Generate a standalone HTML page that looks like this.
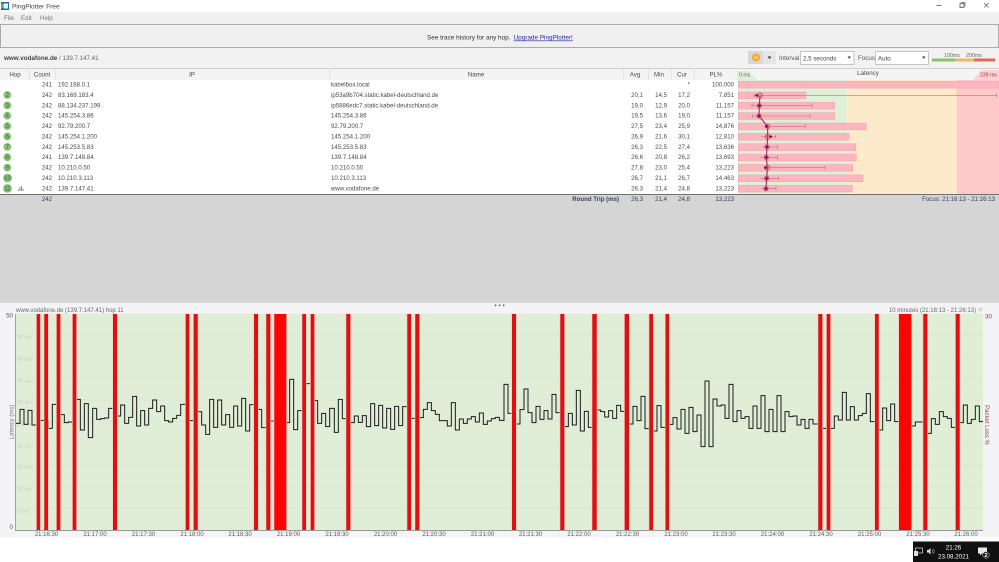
<!DOCTYPE html>
<html><head><meta charset="utf-8"><title>PingPlotter Free</title>
<style>
html,body{margin:0;padding:0;background:#fff;width:999px;height:562px;overflow:hidden}
svg{display:block;position:absolute;left:0;top:0;filter:blur(.25px)}
text{font-family:"Liberation Sans",sans-serif;font-size:6.1px;fill:#4a4a4a}
.e{text-anchor:end}.m{text-anchor:middle}
.h{fill:#4a4a4a;font-size:6.2px}
.n{fill:#34415e}
.t text{fill:#5c5c5c;font-size:6px;text-anchor:middle}
.f text{fill:#c5d4bd;font-size:5.5px}
.b{fill:#3a6435;font-size:6px;text-anchor:middle}
.c{fill:#86c278}
.v path{vector-effect:non-scaling-stroke}
</style></head><body>
<svg width="999" height="562" viewBox="0 0 999 562" xmlns="http://www.w3.org/2000/svg">
<rect width="999" height="562" fill="#fff"/>
<!-- title bar -->
<rect x="1" y="2" width="8" height="8" fill="#1d6fa5"/><rect x="3.5" y="3.5" width="4.5" height="5" fill="#e8f4f8"/><rect x="1" y="4" width="2" height="4" fill="#6fb04f"/>
<text x="12" y="8.5" style="font-size:6.6px;fill:#444">PingPlotter Free</text>
<path d="M936.5 5.5H941.5" stroke="#555" stroke-width=".8"/>
<rect x="960" y="3.5" width="4" height="4" fill="none" stroke="#555" stroke-width=".8"/><path d="M961.5 3V2.4H965V6H964.4" fill="none" stroke="#555" stroke-width=".6"/>
<path d="M984 3L988.5 7.5M988.5 3L984 7.5" stroke="#555" stroke-width=".7"/>
<!-- menu -->
<rect y="12" width="999" height="12" fill="#f0f0f0"/>
<text x="4" y="20" style="font-size:6.2px;fill:#777">File</text><text x="21" y="20" style="font-size:6.2px;fill:#777">Edit</text><text x="40" y="20" style="font-size:6.2px;fill:#777">Help</text>
<!-- banner -->
<rect x=".5" y="24.5" width="998" height="23" fill="#f0f0f0" stroke="#ababab"/>
<text x="427" y="39.5" style="font-size:6.4px;fill:#333">See trace history for any hop.</text>
<text x="513.5" y="39.5" style="font-size:6.4px;fill:#2a2a9a;text-decoration:underline">Upgrade PingPlotter!</text>
<!-- toolbar -->
<rect y="48" width="999" height="20.5" fill="#f2f2f2"/>
<text x="4" y="60" style="font-size:6.3px;font-weight:bold;fill:#444">www.vodafone.de</text>
<text x="59" y="60" style="font-size:6.2px;fill:#666">/ 139.7.147.41</text>
<rect x="748" y="51" width="15.5" height="13" fill="#d8d8d8"/><circle cx="756" cy="57.5" r="4" fill="#f0a92e"/><path d="M755 55.7V59.3M757 55.7V59.3" stroke="#fff3d8" stroke-width=".8"/>
<rect x="764" y="51" width="12" height="13" fill="#e6e6e6"/><path d="M767.5 56.5H771.5L769.5 59Z" fill="#333"/>
<text x="779" y="60" style="font-size:6.2px;fill:#555">Interval</text>
<rect x="800.5" y="51.5" width="53.5" height="13" fill="#fff" stroke="#c4c4c4"/><text x="803" y="60.5" style="font-size:6.2px;fill:#444">2,5 seconds</text><path d="M847.5 56.5H851L849.2 58.8Z" fill="#333"/>
<text x="858" y="60" style="font-size:6.2px;fill:#555">Focus</text>
<rect x="875.5" y="51.5" width="53" height="13" fill="#fff" stroke="#c4c4c4"/><text x="878" y="60.5" style="font-size:6.2px;fill:#444">Auto</text><path d="M922 56.5H925.5L923.7 58.8Z" fill="#333"/>
<rect x="932" y="58.5" width="23" height="3" fill="#8cc070"/><rect x="955" y="58.5" width="19" height="3" fill="#f0b860"/><rect x="974" y="58.5" width="21" height="3" fill="#e2685c"/>
<text x="952" y="57" class="m" style="font-size:5.3px;fill:#666">100ms</text><text x="974" y="57" class="m" style="font-size:5.3px;fill:#666">200ms</text>
<!-- header -->
<rect y="68.5" width="999" height="11.5" fill="#f4f4f4"/><path d="M0 68.5H999" stroke="#c4c4c4" stroke-width=".8"/>
<path d="M29.5 69V80M55.5 69V80M329.5 69V80M623.5 69V80M648.5 69V80M671.5 69V80M694.5 69V80M737.5 69V80" stroke="#e4e4e4"/>
<polygon points="738,71 748,71 758,80 738,80" fill="#dcefd4"/>
<polygon points="981,70 999,70 999,80 973,80" fill="#ffd3d3"/>
<text x="15" y="76.5" class="h m">Hop</text><text x="42" y="76.5" class="h m">Count</text><text x="192" y="76.5" class="h m">IP</text><text x="476" y="76.5" class="h m">Name</text>
<text x="635" y="76.5" class="h m">Avg</text><text x="659" y="76.5" class="h m">Min</text><text x="682" y="76.5" class="h m">Cur</text><text x="716" y="76.5" class="h m">PL%</text>
<text x="868" y="75" class="h m">Latency</text>
<text x="739" y="76.5" style="font-size:5.2px;fill:#667">0 ms</text><text x="997" y="76.5" class="e" style="font-size:5.2px;fill:#8a3a3a">239 ms</text>
<!-- latency background -->
<rect x="738" y="80" width="108.7" height="114" fill="#dff0d8"/><rect x="846.7" y="80" width="110" height="114" fill="#fdeacb"/><rect x="956.7" y="80" width="42.3" height="114" fill="#ffc9c9"/>
<!-- latency bars -->
<g fill="#fdb6c0" stroke="#efa0ac" stroke-width=".5">
<rect x="738.3" y="81.3" width="260.7" height="6.8"/><rect x="738.3" y="92" width="67.7" height="6.8"/><rect x="738.3" y="102.3" width="96.4" height="6.8"/><rect x="738.3" y="112.7" width="96.4" height="6.8"/><rect x="738.3" y="123" width="128" height="6.8"/><rect x="738.3" y="133.4" width="110.7" height="6.8"/><rect x="738.3" y="143.8" width="117.4" height="6.8"/><rect x="738.3" y="154.1" width="118" height="6.8"/><rect x="738.3" y="164.5" width="114.4" height="6.8"/><rect x="738.3" y="174.9" width="124.7" height="6.8"/><rect x="738.3" y="185.2" width="114" height="6.8"/>
</g>
<g transform="translate(700 70) scale(.33333)" class="v">
<path d="M162 76H890M156 107H336M158 138H330M192 169H316M184 200H226M187 231H232M181 262H233M191 293H375M182 325H236M184 356H228" stroke="#b87088" stroke-width=".6" fill="none"/>
<path d="M162 70V82M890 70V82M156 101V113M336 101V113M158 132V144M330 132V144M316 163V175M226 194V206M232 225V237M233 256V268M375 287V299M236 319V331M228 350V362" stroke="#b87088" stroke-width=".6" fill="none"/>
<path d="M180 76L178 107L177 138L203 169L203 200L201 231L199 262L202 293L200 325L198 356" stroke="#a42848" stroke-width="1.1" fill="none"/>
<g fill="none" stroke="#d0405c" stroke-width="3"><circle cx="180" cy="76" r="7"/><circle cx="178" cy="107" r="6"/><circle cx="177" cy="138" r="6"/><circle cx="203" cy="169" r="6"/><circle cx="203" cy="200" r="7"/><circle cx="201" cy="231" r="6"/><circle cx="199" cy="262" r="6"/><circle cx="202" cy="293" r="7"/><circle cx="200" cy="325" r="6"/><circle cx="198" cy="356" r="6"/></g>
<g fill="#5a1a7a"><circle cx="170" cy="76" r="4"/><circle cx="178" cy="107" r="4"/><circle cx="177" cy="138" r="4"/><circle cx="199" cy="169" r="4"/><circle cx="212" cy="200" r="4"/><circle cx="201" cy="231" r="4"/><circle cx="199" cy="262" r="4"/><circle cx="196" cy="293" r="4"/><circle cx="200" cy="325" r="4"/><circle cx="198" cy="356" r="4"/></g>
</g>
<!-- rows -->
<g>
<text x="52" y="86.7" class="e">241</text><text x="58" y="86.7">192.168.0.1</text><text x="331" y="86.7">kabelbox.local</text><text x="690" y="86.7" class="e">*</text><text x="734" y="86.7" class="e">100,000</text>
<circle class="c" cx="7.3" cy="95" r="3.9"/><text class="b" x="7.3" y="97">2</text><text x="52" y="97" class="e">242</text><text x="58" y="97">83.169.183.4</text><text x="331" y="97">ip53a9b704.static.kabel-deutschland.de</text><text x="643" y="97" class="e">20,1</text><text x="667" y="97" class="e">14,5</text><text x="690" y="97" class="e">17,2</text><text x="734" y="97" class="e">7,851</text>
<circle class="c" cx="7.3" cy="105.4" r="3.9"/><text class="b" x="7.3" y="107.4">3</text><text x="52" y="107.4" class="e">242</text><text x="58" y="107.4">88.134.237.199</text><text x="331" y="107.4">ip5886edc7.static.kabel-deutschland.de</text><text x="643" y="107.4" class="e">19,0</text><text x="667" y="107.4" class="e">12,9</text><text x="690" y="107.4" class="e">20,0</text><text x="734" y="107.4" class="e">11,157</text>
<circle class="c" cx="7.3" cy="115.7" r="3.9"/><text class="b" x="7.3" y="117.7">4</text><text x="52" y="117.7" class="e">242</text><text x="58" y="117.7">145.254.3.86</text><text x="331" y="117.7">145.254.3.86</text><text x="643" y="117.7" class="e">19,5</text><text x="667" y="117.7" class="e">13,6</text><text x="690" y="117.7" class="e">19,0</text><text x="734" y="117.7" class="e">11,157</text>
<circle class="c" cx="7.3" cy="126.1" r="3.9"/><text class="b" x="7.3" y="128.1">5</text><text x="52" y="128.1" class="e">242</text><text x="58" y="128.1">92.79.200.7</text><text x="331" y="128.1">92.79.200.7</text><text x="643" y="128.1" class="e">27,5</text><text x="667" y="128.1" class="e">23,4</text><text x="690" y="128.1" class="e">25,9</text><text x="734" y="128.1" class="e">14,876</text>
<circle class="c" cx="7.3" cy="136.5" r="3.9"/><text class="b" x="7.3" y="138.5">6</text><text x="52" y="138.5" class="e">242</text><text x="58" y="138.5">145.254.1.200</text><text x="331" y="138.5">145.254.1.200</text><text x="643" y="138.5" class="e">26,9</text><text x="667" y="138.5" class="e">21,6</text><text x="690" y="138.5" class="e">30,1</text><text x="734" y="138.5" class="e">12,810</text>
<circle class="c" cx="7.3" cy="146.9" r="3.9"/><text class="b" x="7.3" y="148.9">7</text><text x="52" y="148.9" class="e">242</text><text x="58" y="148.9">145.253.5.83</text><text x="331" y="148.9">145.253.5.83</text><text x="643" y="148.9" class="e">26,3</text><text x="667" y="148.9" class="e">22,5</text><text x="690" y="148.9" class="e">27,4</text><text x="734" y="148.9" class="e">13,636</text>
<circle class="c" cx="7.3" cy="157.2" r="3.9"/><text class="b" x="7.3" y="159.2">8</text><text x="52" y="159.2" class="e">241</text><text x="58" y="159.2">139.7.148.84</text><text x="331" y="159.2">139.7.148.84</text><text x="643" y="159.2" class="e">26,6</text><text x="667" y="159.2" class="e">20,8</text><text x="690" y="159.2" class="e">26,2</text><text x="734" y="159.2" class="e">13,693</text>
<circle class="c" cx="7.3" cy="167.6" r="3.9"/><text class="b" x="7.3" y="169.6">9</text><text x="52" y="169.6" class="e">242</text><text x="58" y="169.6">10.210.0.50</text><text x="331" y="169.6">10.210.0.50</text><text x="643" y="169.6" class="e">27,8</text><text x="667" y="169.6" class="e">23,0</text><text x="690" y="169.6" class="e">25,4</text><text x="734" y="169.6" class="e">13,223</text>
<circle class="c" cx="7.5" cy="178" r="4.4"/><text class="b" x="7.5" y="180">10</text><text x="52" y="180" class="e">242</text><text x="58" y="180">10.210.3.113</text><text x="331" y="180">10.210.3.113</text><text x="643" y="180" class="e">26,7</text><text x="667" y="180" class="e">21,1</text><text x="690" y="180" class="e">26,7</text><text x="734" y="180" class="e">14,463</text>
<circle class="c" cx="7.5" cy="188.4" r="4.4"/><text class="b" x="7.5" y="190.4">11</text><path d="M18.5 191V189M20 191V187M21.5 191V186M23 191V188.5" stroke="#666" stroke-width=".7"/><text x="52" y="190.7" class="e">242</text><text x="58" y="190.7">139.7.147.41</text><text x="331" y="190.7">www.vodafone.de</text><text x="643" y="190.7" class="e">26,3</text><text x="667" y="190.7" class="e">21,4</text><text x="690" y="190.7" class="e">24,8</text><text x="734" y="190.7" class="e">13,223</text>
</g>
<!-- summary -->
<rect y="194" width="999" height="109" fill="#d5d5d5"/><path d="M0 194.5H999" stroke="#707070"/>
<text x="52" y="201" class="e n">242</text>
<text x="619" y="201" class="e n" style="font-weight:bold">Round Trip (ms)</text>
<text x="643" y="201" class="e n">26,3</text><text x="667" y="201" class="e n">21,4</text><text x="690" y="201" class="e n">24,8</text><text x="734" y="201" class="e n">13,223</text>
<text x="995" y="201" class="e n">Focus: 21:16:13 - 21:26:13</text>
<!-- chart frame -->
<rect y="303" width="999" height="234.5" fill="#f4f4f6"/>
<circle cx="495.5" cy="305.3" r=".9" fill="#666"/><circle cx="499.6" cy="305.3" r=".9" fill="#666"/><circle cx="503.7" cy="305.3" r=".9" fill="#666"/>
<text x="16" y="312" style="font-size:6px;fill:#666">www.vodafone.de (139.7.147.41) hop 11</text>
<text x="976" y="312" class="e" style="font-size:6px;fill:#666">10 minutes (21:16:13 - 21:26:13)</text>
<circle cx="980.5" cy="309.5" r="2" fill="#d8d8d8"/>
<rect x="16" y="313.5" width="967" height="216.5" fill="#e0eed8"/>
<path d="M16 335H983M16 357H983M16 378H983M16 400H983M16 421H983M16 443H983M16 465H983M16 486H983M16 508H983" stroke="#d6e5ce" stroke-width=".8"/>
<g class="f"><text x="17" y="339">45 ms</text><text x="17" y="361">40 ms</text><text x="17" y="383">35 ms</text><text x="17" y="404">30 ms</text><text x="17" y="426">25 ms</text><text x="17" y="448">20 ms</text><text x="17" y="469">15 ms</text><text x="17" y="491">10 ms</text><text x="17" y="513">5 ms</text></g>
<path d="M15.5 314V530.5H983" fill="none" stroke="#999" stroke-width=".9"/>
<text x="13" y="317.5" class="e" style="font-size:6.2px;fill:#555">50</text><text x="13" y="529" class="e" style="font-size:6.2px;fill:#555">0</text>
<text transform="translate(13.5 422) rotate(-90)" class="m" style="font-size:6px;fill:#777">Latency (ms)</text>
<text x="985" y="318.5" style="font-size:6.2px;fill:#8a4040">30</text>
<text transform="translate(985 425) rotate(90)" class="m" style="font-size:6px;fill:#8a4040">Packet Loss %</text>
<!-- latency line -->
<g fill="none" stroke="#1a1a1a" stroke-width="1">
<path vector-effect="non-scaling-stroke" transform="translate(0 370) scale(.33333)" d="M48 160H60V118H72V163H84V121H96V165H120V151H145V175H157V103H181V134H193V158H205V156H229V88H241V180H253V101H265V203H278V115H290V148H302V146H314V144H326V115H350V138H362V105H374V160H386V142H398V79H410V168H422V122H434V165H446V115H458V90H470V125H482V108H494V152H506V156H518V145H530V136H542V103H566V152H593V125H605V165H617V193H629V88H641V172H653V90H665V165H677V134H689V172H701V108H713V168H725V85H737V183H749V104H773V118H785V173H809V153H857V158H869V28H881V179H893V122H917V41H941V92H953V160H965V130H977V170H989V115H999"/>
<path vector-effect="non-scaling-stroke" transform="translate(333 370) scale(.33333)" d="M0 115H4V187H16V88H28V146H52V158H64V138H76V157H88V137H100V170H113V101H125V167H137V106H149V174H161V115H173V178H185V109H197V167H209V110H234V145H259V143H271V118H283V98H295V122H307V133H319V152H343V168H355V98H367V180H379V147H391V160H403V147H415V140H427V156H439V129H451V163H463V153H475V146H487V142H499V151H513V43H525V130H549V162H561V119H573V57H585V128H597V158H609V109H621V148H633V122H645V147H657V73H669V128H694V170H706V130H718V165H730V61H742V183H754V124H766V172H791V120H803V125H815V141H827V122H839V145H851V106H863V124H888V162H900V109H912V152H924V79H936V176H960V183H972V107H984V172H999"/>
<path vector-effect="non-scaling-stroke" transform="translate(666 300) scale(.33333)" d="M0 382H9V373H21V353H33V387H45V328H57V400H69V322H81V395H93V345H105V440H117V243H129V440H141V297H153V318H165V315H177V355H189V253H201V365H213V332H225V355H237V350H249V385H261V318H273V385H285V287H297V395H309V328H321V395H333V287H345V395H357V335H369V350H381V348H393V375H405V358H417V385H429V358H441V372H469V385H505V348H517V360H529V277H541V360H553V320H565V360H577V347H589V340H601V281H613V365H638V390H650V324H662V362H674V312H686V365H736V378H748V366H784V400H796V356H808V373H820V335H832V350H844V355H856V382H880V368H892V315H904V370H916V358H928V318H940V365H951"/>
</g>
<!-- loss bars -->
<g fill="#f6c8c0">
<rect x="36" y="314" width="4.8" height="216"/><rect x="43.6" y="314" width="5" height="216"/><rect x="56" y="314" width="5" height="216"/><rect x="72" y="314" width="5" height="216"/><rect x="112.3" y="314" width="5.4" height="216"/><rect x="185" y="314" width="5" height="216"/><rect x="193" y="314" width="5.4" height="216"/><rect x="253.3" y="314" width="5.4" height="216"/><rect x="265.6" y="314" width="5.4" height="216"/><rect x="273.6" y="314" width="13.4" height="216"/><rect x="301.6" y="314" width="5" height="216"/><rect x="310" y="314" width="5" height="216"/><rect x="345.6" y="314" width="5.4" height="216"/><rect x="406.6" y="314" width="5" height="216"/><rect x="414.6" y="314" width="5.4" height="216"/><rect x="511.3" y="314" width="5.4" height="216"/><rect x="559.6" y="314" width="5.4" height="216"/><rect x="591.6" y="314" width="5.8" height="216"/><rect x="624" y="314" width="5.6" height="216"/><rect x="648.6" y="314" width="5" height="216"/><rect x="665" y="314" width="4.8" height="216"/><rect x="817.6" y="314" width="5.4" height="216"/><rect x="826" y="314" width="5" height="216"/><rect x="874.3" y="314" width="5" height="216"/><rect x="898.3" y="314" width="13.6" height="216"/><rect x="922.6" y="314" width="5.4" height="216"/><rect x="955" y="314" width="5.4" height="216"/>
</g>
<g fill="#de1010">
<rect x="36.7" y="314" width="3.4" height="216"/><rect x="44.3" y="314" width="3.7" height="216"/><rect x="56.7" y="314" width="3.6" height="216"/><rect x="72.7" y="314" width="3.6" height="216"/><rect x="113" y="314" width="4" height="216"/><rect x="185.7" y="314" width="3.6" height="216"/><rect x="193.7" y="314" width="4" height="216"/><rect x="254" y="314" width="4" height="216"/><rect x="266.3" y="314" width="4" height="216"/><rect x="274.3" y="314" width="12" height="216" fill="#fa0404"/><rect x="302.3" y="314" width="3.7" height="216"/><rect x="310.7" y="314" width="3.6" height="216"/><rect x="346.3" y="314" width="4" height="216"/><rect x="407.3" y="314" width="3.7" height="216"/><rect x="415.3" y="314" width="4" height="216"/><rect x="512" y="314" width="4" height="216"/><rect x="560.3" y="314" width="4" height="216"/><rect x="592.3" y="314" width="4.4" height="216"/><rect x="624.7" y="314" width="4.3" height="216"/><rect x="649.3" y="314" width="3.7" height="216"/><rect x="665.5" y="314" width="3.5" height="216"/><rect x="818.3" y="314" width="4" height="216"/><rect x="826.7" y="314" width="3.6" height="216"/><rect x="875" y="314" width="3.7" height="216"/><rect x="899" y="314" width="12.3" height="216" fill="#fa0404"/><rect x="923.3" y="314" width="4" height="216"/><rect x="955.7" y="314" width="4" height="216"/>
</g>
<!-- x labels -->
<g class="t">
<text x="46.5" y="536">21:16:30</text><text x="95" y="536">21:17:00</text><text x="143.5" y="536">21:17:30</text><text x="192" y="536">21:18:00</text><text x="240" y="536">21:18:30</text><text x="288.5" y="536">21:19:00</text><text x="337" y="536">21:19:30</text><text x="385.5" y="536">21:20:00</text><text x="434" y="536">21:20:30</text><text x="482.5" y="536">21:21:00</text><text x="530.5" y="536">21:21:30</text><text x="579" y="536">21:22:00</text><text x="627.5" y="536">21:22:30</text><text x="676" y="536">21:23:00</text><text x="724" y="536">21:23:30</text><text x="772.5" y="536">21:24:00</text><text x="821" y="536">21:24:30</text><text x="869.5" y="536">21:25:00</text><text x="918" y="536">21:25:30</text><text x="966" y="536">21:26:00</text>
</g>
<!-- taskbar -->
<rect x="913" y="541.5" width="86" height="20.5" fill="#101010"/>
<rect x="915.5" y="548" width="7" height="5" fill="none" stroke="#ddd" stroke-width=".7"/><rect x="914" y="551" width="4" height="5" fill="#ddd"/>
<path d="M927 550H928.5L930.5 548V554.5L928.5 552.5H927Z" fill="#ddd"/><path d="M932 549.5Q933.2 551.2 932 553M933.3 548.5Q935.2 551.2 933.3 554" fill="none" stroke="#ccc" stroke-width=".5"/>
<text x="953.5" y="549.5" class="m" style="font-size:6.2px;fill:#fff">21:26</text>
<text x="953.5" y="558.5" class="m" style="font-size:6.2px;fill:#fff">23.08.2021</text>
<path d="M978 547.5H987V553.5H982L980 555.5V553.5H978Z" fill="#e8e8e8"/>
<circle cx="986" cy="555" r="3.3" fill="#222" stroke="#bbb" stroke-width=".5"/><text x="986" y="557" class="m" style="font-size:5.5px;fill:#fff;font-weight:bold">2</text>
</svg>
</body></html>
